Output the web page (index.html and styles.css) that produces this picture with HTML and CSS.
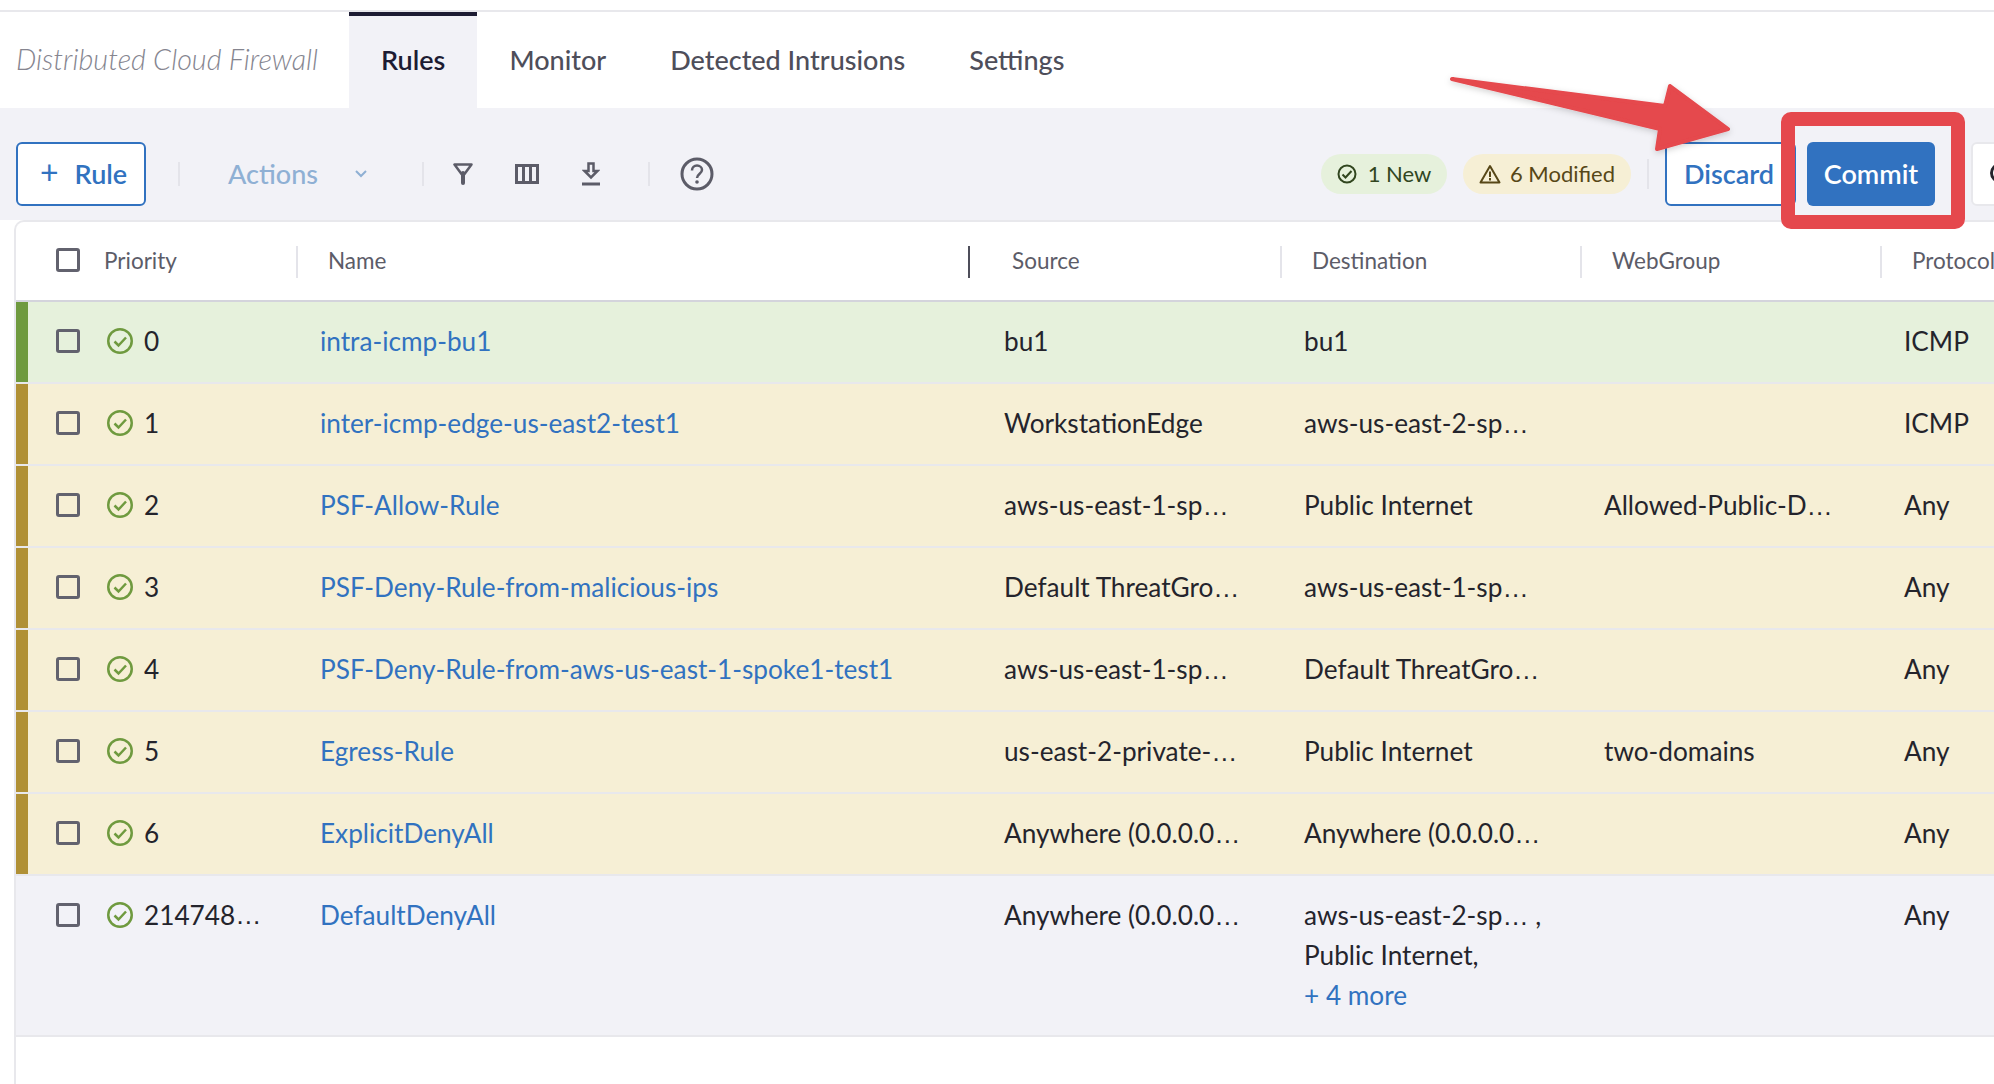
FILE: index.html
```html
<!DOCTYPE html>
<html lang="en">
<head>
    <meta charset="UTF-8">
    <meta name="viewport" content="width=device-width, initial-scale=1.0">
    <title>Distributed Cloud Firewall</title>
    <link rel="stylesheet" href="styles.css">
</head>
<body>
    <!-- Icône de statut, réutilisée dans chaque ligne -->
    <svg class="defs" width="0" height="0">
        <symbol id="ok" viewBox="0 0 26 26">
            <circle cx="13" cy="13" r="11.750" fill="none" stroke="#6f9a3f" stroke-width="2.500"/>
            <path d="M7.500 13.500l4 4 7.500-8" fill="none" stroke="#6f9a3f" stroke-width="2.500"/>
        </symbol>
    </svg>

    <div id="page">
        <!-- Onglets -->
        <nav class="tabs">
            <span class="tabs-title">Distributed Cloud Firewall</span>
            <a class="tab active">Rules</a>
            <a class="tab">Monitor</a>
            <a class="tab">Detected Intrusions</a>
            <a class="tab">Settings</a>
        </nav>

        <!-- Barre d'outils -->
        <div class="toolbar">
            <button class="btn btn-outline btn-rule"><span class="plus">+</span>Rule</button>
            <span class="sep sep-a"></span>
            <span class="actions">Actions</span>
            <svg class="tool chevron" width="14" height="10" viewBox="0 0 14 10"><path d="M2 2l5 5 5-5" fill="none" stroke="#8fb0d4" stroke-width="2"/></svg>
            <span class="sep sep-b"></span>
            <svg class="tool tool-filter" width="20" height="22" viewBox="0 0 20 22"><path d="M1.500 1.500h17L11.500 11h-3z" fill="none" stroke="#5c5c68" stroke-width="2.500" stroke-linejoin="round"/><path d="M10 10v10" stroke="#5c5c68" stroke-width="4" stroke-linecap="round"/></svg>
            <svg class="tool tool-cols" width="24" height="20" viewBox="0 0 24 20"><path d="M1.500 1.500h21v17h-21zM8.500 1.500v17M15.500 1.500v17" fill="none" stroke="#5c5c68" stroke-width="3"/></svg>
            <svg class="tool tool-down" width="18" height="24" viewBox="0 0 18 24"><path d="M6.500 1.500h5v7.500h4L9 15.500 2.500 9h4z" fill="none" stroke="#5c5c68" stroke-width="2.500"/><path d="M0 22h18" stroke="#5c5c68" stroke-width="3"/></svg>
            <span class="sep sep-c"></span>
            <svg class="tool tool-help" width="34" height="34" viewBox="0 0 34 34"><circle cx="17" cy="17" r="15" fill="none" stroke="#5c5c68" stroke-width="3"/><path d="M12 13.500c0-3 2.200-5 5-5s5 2 5 4.500c0 3.500-5 4-5 8" fill="none" stroke="#5c5c68" stroke-width="2.500"/><circle cx="17" cy="25" r="1.800" fill="#5c5c68"/></svg>

            <div class="toolbar-right">
                <span class="pill pill-new">
                    <svg width="20" height="20" viewBox="0 0 20 20"><circle cx="10" cy="10" r="8.500" fill="none" stroke="#31461f" stroke-width="2"/><path d="M5.500 10.500l3 3 6-6.500" fill="none" stroke="#31461f" stroke-width="2"/></svg>
                    1 New
                </span>
                <span class="pill pill-mod">
                    <svg width="22" height="20" viewBox="0 0 22 20"><path d="M11 2l9.500 16.500h-19z" fill="none" stroke="#574717" stroke-width="2" stroke-linejoin="round"/><path d="M11 7.500v5.500M11 14v2.500" stroke="#574717" stroke-width="2"/></svg>
                    6 Modified
                </span>
                <span class="sep sep-d"></span>
                <button class="btn btn-outline btn-discard">Discard</button>
                <button class="btn btn-primary">Commit</button>
                <button class="btn btn-ghost"><span class="ghost-ring"></span></button>
            </div>
        </div>

        <!-- Tableau -->
        <div class="table">
            <div class="row head">
                <div class="cell"><span class="box"></span>Priority</div>
                <div class="cell">Name</div>
                <div class="cell source">Source</div>
                <div class="cell">Destination</div>
                <div class="cell">WebGroup</div>
                <div class="cell">Protocol</div>
            </div>

            <div class="row rule new">
                <div class="cell"><span class="box"></span><svg class="status"><use href="#ok"/></svg>0</div>
                <div class="cell"><a class="link">intra-icmp-bu1</a></div>
                <div class="cell source">bu1</div>
                <div class="cell">bu1</div>
                <div class="cell"></div>
                <div class="cell">ICMP</div>
            </div>
            <div class="row rule modified">
                <div class="cell"><span class="box"></span><svg class="status"><use href="#ok"/></svg>1</div>
                <div class="cell"><a class="link">inter-icmp-edge-us-east2-test1</a></div>
                <div class="cell source">WorkstationEdge</div>
                <div class="cell">aws-us-east-2-sp<span class="dots">…</span></div>
                <div class="cell"></div>
                <div class="cell">ICMP</div>
            </div>
            <div class="row rule modified">
                <div class="cell"><span class="box"></span><svg class="status"><use href="#ok"/></svg>2</div>
                <div class="cell"><a class="link">PSF-Allow-Rule</a></div>
                <div class="cell source">aws-us-east-1-sp<span class="dots">…</span></div>
                <div class="cell">Public Internet</div>
                <div class="cell">Allowed-Public-D<span class="dots">…</span></div>
                <div class="cell">Any</div>
            </div>
            <div class="row rule modified">
                <div class="cell"><span class="box"></span><svg class="status"><use href="#ok"/></svg>3</div>
                <div class="cell"><a class="link">PSF-Deny-Rule-from-malicious-ips</a></div>
                <div class="cell source">Default ThreatGro<span class="dots">…</span></div>
                <div class="cell">aws-us-east-1-sp<span class="dots">…</span></div>
                <div class="cell"></div>
                <div class="cell">Any</div>
            </div>
            <div class="row rule modified">
                <div class="cell"><span class="box"></span><svg class="status"><use href="#ok"/></svg>4</div>
                <div class="cell"><a class="link">PSF-Deny-Rule-from-aws-us-east-1-spoke1-test1</a></div>
                <div class="cell source">aws-us-east-1-sp<span class="dots">…</span></div>
                <div class="cell">Default ThreatGro<span class="dots">…</span></div>
                <div class="cell"></div>
                <div class="cell">Any</div>
            </div>
            <div class="row rule modified">
                <div class="cell"><span class="box"></span><svg class="status"><use href="#ok"/></svg>5</div>
                <div class="cell"><a class="link">Egress-Rule</a></div>
                <div class="cell source">us-east-2-private-<span class="dots">…</span></div>
                <div class="cell">Public Internet</div>
                <div class="cell">two-domains</div>
                <div class="cell">Any</div>
            </div>
            <div class="row rule modified">
                <div class="cell"><span class="box"></span><svg class="status"><use href="#ok"/></svg>6</div>
                <div class="cell"><a class="link">ExplicitDenyAll</a></div>
                <div class="cell source">Anywhere (0.0.0.0<span class="dots">…</span></div>
                <div class="cell">Anywhere (0.0.0.0<span class="dots">…</span></div>
                <div class="cell"></div>
                <div class="cell">Any</div>
            </div>
            <div class="row rule plain">
                <div class="cell"><span class="box"></span><svg class="status"><use href="#ok"/></svg>214748<span class="dots">…</span></div>
                <div class="cell"><a class="link">DefaultDenyAll</a></div>
                <div class="cell source">Anywhere (0.0.0.0<span class="dots">…</span></div>
                <div class="cell">aws-us-east-2-sp<span class="dots">…</span> ,<br>Public Internet,<br><a class="link">+ 4 more</a></div>
                <div class="cell"></div>
                <div class="cell">Any</div>
            </div>
        </div>

        <!-- Annotation -->
        <svg class="annotation" width="1994" height="1084" viewBox="0 0 1994 1084">
            <defs>
                <filter id="soft" x="-10%" y="-10%" width="120%" height="130%"><feDropShadow dx="0" dy="2" stdDeviation="3" flood-color="#000" flood-opacity="0.18"/></filter>
            </defs>
            <path d="M1452 79L1665 106L1670 86L1728 129L1657 149L1660 129Z" fill="#e5484d" stroke="#e5484d" stroke-width="4" stroke-linejoin="round" filter="url(#soft)"/>
            <rect x="1788" y="119" width="170" height="103" rx="3" fill="none" stroke="#e5484d" stroke-width="14"/>
        </svg>
    </div>
</body>
</html>
```

FILE: styles.css
```css
* {
    box-sizing: border-box;
}
html, body {
    margin: 0;
    padding: 0;
    height: 100%;
    overflow: hidden;
}
body {
    font-family: Lato, "Noto Sans", sans-serif;
    font-size: 26.2px;
    color: #24242c;
    background-color: #ffffff;
}
.defs {
    position: absolute;
}
#page {
    position: relative;
    display: flex;
    flex-direction: column;
    height: 100vh;
    padding-top: 10px;
    overflow: hidden;
}
.tabs {
    display: flex;
    align-items: stretch;
    height: 98px;
    border-top: 2px solid #e8e8ec;
    flex-shrink: 0;
}
.tabs-title {
    width: 349px;
    padding-left: 16px;
    line-height: 94px;
    font-size: 28.7px;
    font-style: italic;
    font-weight: 300;
    color: #85858f;
}
.tab {
    padding: 0 32px;
    line-height: 88px;
    border-top: 4px solid transparent;
    font-size: 27px;
    font-weight: 500;
    color: #4e4e5a;
}
.tab.active {
    border-top-color: #1d1c33;
    background-color: #f2f2f7;
    color: #1d1c33;
    font-weight: 600;
}
.toolbar {
    display: flex;
    align-items: center;
    height: 112px;
    padding: 20px 0 0 16px;
    background-color: #f2f2f7;
    flex-shrink: 0;
}
.btn {
    height: 64px;
    border-radius: 6px;
    font-family: inherit;
    font-size: 27px;
    font-weight: 600;
    padding: 0 0 2px;
    flex-shrink: 0;
}
.btn-outline {
    background-color: #ffffff;
    border: 2px solid #3172c0;
    color: #3172c0;
}
.btn-rule {
    width: 130px;
    text-align: left;
    padding-left: 22px;
}
.plus {
    font-weight: 400;
    font-size: 32px;
    line-height: 1;
    margin-right: 16px;
}
.sep {
    width: 2px;
    height: 24px;
    background-color: #e4e4ea;
    flex-shrink: 0;
}
.sep-a {
    margin-left: 32px;
}
.actions {
    margin-left: 48px;
    width: 88px;
    padding-bottom: 2px;
    font-size: 27px;
    font-weight: 500;
    color: #8fb0d4;
    flex-shrink: 0;
}
.tool {
    flex-shrink: 0;
}
.chevron {
    margin-left: 38px;
}
.sep-b {
    margin-left: 54px;
}
.tool-filter {
    margin-left: 29px;
}
.tool-cols {
    margin-left: 42px;
}
.tool-down {
    margin-left: 43px;
}
.sep-c {
    margin-left: 48px;
}
.tool-help {
    margin-left: 30px;
}
.toolbar-right {
    display: flex;
    align-items: center;
    margin-left: 607px;
    flex-shrink: 0;
}
.pill {
    display: flex;
    align-items: center;
    justify-content: center;
    height: 40px;
    padding-bottom: 2px;
    border-radius: 20px;
    font-size: 22px;
}
.pill svg {
    margin-top: 2px;
}
.pill-new {
    gap: 11px;
    width: 126px;
    background-color: #e6f1dc;
    color: #31461f;
}
.pill-mod {
    gap: 9px;
    width: 168px;
    margin-left: 16px;
    background-color: #f6efd5;
    color: #574717;
}
.sep-d {
    margin-left: 16px;
    height: 30px;
}
.btn-discard {
    width: 131px;
    margin-left: 16px;
    text-align: left;
    padding-left: 17px;
}
.btn-primary {
    width: 128px;
    margin-left: 11px;
    background-color: #3172c0;
    border: none;
    color: #ffffff;
}
.btn-ghost {
    width: 120px;
    margin-left: 36px;
    background-color: #ffffff;
    border: 2px solid #e8e8ec;
}
.ghost-ring {
    display: block;
    width: 20px;
    height: 20px;
    margin-left: 17px;
    border: 3px solid #24242c;
    border-radius: 50%;
}
.table {
    flex: 1;
    margin-left: 14px;
    background-color: #ffffff;
    border-left: 2px solid #e8e8ec;
    border-top: 2px solid #e8e8ec;
    border-top-left-radius: 10px;
}
.row {
    display: grid;
    grid-template-columns: 280px 672px 312px 300px 300px 300px;
    width: 2164px;
    border-bottom: 2px solid #e8e8ec;
}
.row.head {
    height: 80px;
    border-bottom-color: #d4d4dc;
    font-size: 22.5px;
    color: #5c5c68;
}
.head .cell {
    display: flex;
    align-items: center;
    position: relative;
    padding: 0 0 2px 32px;
}
.head .cell + .cell::before {
    content: "";
    position: absolute;
    left: 0;
    top: 24px;
    width: 2px;
    height: 32px;
    background-color: #e4e4ea;
}
.head .cell:first-child {
    padding-left: 40px;
}
.head .cell.source {
    padding-left: 44px;
}
.head .cell.source::before {
    background-color: #4e4e5a;
}
.box {
    width: 24px;
    height: 24px;
    margin-right: 24px;
    border: 3px solid #62626e;
    border-radius: 3px;
    flex-shrink: 0;
}
.rule {
    position: relative;
    line-height: 40px;
    padding: 19px 0 21px;
}
.rule.new {
    background-color: #e6f1dc;
}
.rule.modified {
    background-color: #f6efd5;
}
.rule.plain {
    padding-bottom: 20px;
    background-color: #f2f2f7;
}
.rule::before {
    content: "";
    position: absolute;
    left: 0;
    top: 0;
    bottom: 0;
    width: 12px;
}
.rule.new::before {
    background-color: #6f9a3f;
}
.rule.modified::before {
    background-color: #b09035;
}
.rule .cell {
    padding-left: 24px;
    white-space: nowrap;
}
.rule .cell:first-child {
    display: flex;
    align-items: center;
    height: 40px;
    padding-left: 40px;
}
.rule .source {
    padding-left: 36px;
}
.rule .box {
    margin-right: 27px;
}
.status {
    width: 26px;
    height: 26px;
    margin-right: 11px;
    flex-shrink: 0;
}
.dots {
    font-family: "Liberation Sans", sans-serif;
    line-height: 1;
}
a.link {
    color: #3172c0;
}
.annotation {
    position: absolute;
    top: 0;
    left: 0;
    pointer-events: none;
}
```
